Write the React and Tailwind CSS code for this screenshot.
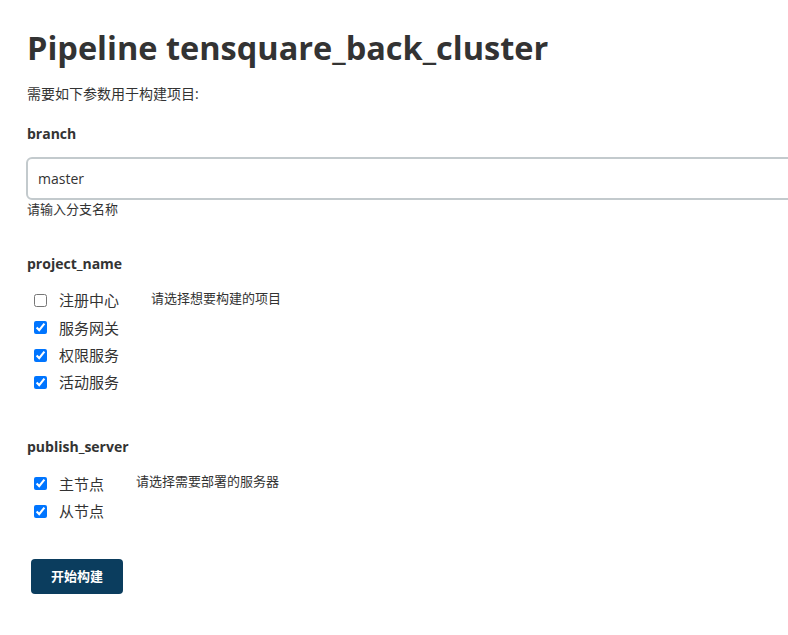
import { useState } from "react"

const FONT = { fontFamily: '"Open Sans", "Noto Sans CJK SC", sans-serif' }

const PROJECTS = [
  { id: "register", label: "注册中心", checked: false },
  { id: "gateway", label: "服务网关", checked: true },
  { id: "auth", label: "权限服务", checked: true },
  { id: "activity", label: "活动服务", checked: true },
]

const SERVERS = [
  { id: "master", label: "主节点", checked: true },
  { id: "slave", label: "从节点", checked: true },
]

function CheckList({ items, hint, hintClass }) {
  const [state, setState] = useState(() =>
    Object.fromEntries(items.map((i) => [i.id, i.checked]))
  )
  return (
    <div className="flex items-start">
      <div className="flex flex-col pl-[7px]">
        {items.map((item) => (
          <label key={item.id} className="flex h-[27.3px] items-center">
            <input
              type="checkbox"
              checked={state[item.id]}
              onChange={(e) => setState({ ...state, [item.id]: e.target.checked })}
              className="m-0 h-[13px] w-[13px] accent-[#0075ff]"
            />
            <span className="ml-[12px] text-[15px] text-[#333]">{item.label}</span>
          </label>
        ))}
      </div>
      <div className={`pt-[2px] text-[13px] text-[#333] ${hintClass}`}>{hint}</div>
    </div>
  )
}

export default function App() {
  const [branch, setBranch] = useState("master")

  return (
    <div className="min-h-[635px] overflow-hidden bg-white text-[#333]" style={FONT}>
      <div className="pl-[27px] pt-[24px]">
        <h1 className="text-[32.5px] font-bold leading-[48px] text-[#333]">
          Pipeline tensquare_back_cluster
        </h1>
        <p className="mt-[12px] text-[14px] leading-[20px]">需要如下参数用于构建项目:</p>

        <div className="mt-[20px] text-[14px] font-bold leading-[20px]">branch</div>
        <input
          value={branch}
          onChange={(e) => setBranch(e.target.value)}
          className="mt-[13px] ml-[-1px] block h-[43px] w-[900px] rounded-[6px] border-2 border-[#c3cacd] px-[10px] text-[14px] text-[#333] outline-none"
        />
        <div className="mt-0 text-[13px] leading-[18px]">请输入分支名称</div>

        <div className="mt-[36px] text-[14px] font-bold leading-[20px]">project_name</div>
        <div className="mt-[13px]">
          <CheckList items={PROJECTS} hint="请选择想要构建的项目" hintClass="ml-[32px]" />
        </div>

        <div className="mt-[41px] text-[14px] font-bold leading-[20px]">publish_server</div>
        <div className="mt-[13px]">
          <CheckList items={SERVERS} hint="请选择需要部署的服务器" hintClass="ml-[32px]" />
        </div>

        <button className="mt-[34px] ml-[4px] h-[35px] w-[92px] rounded-[4px] bg-[#0b3d5e] text-[13px] font-bold text-white">
          开始构建
        </button>
      </div>
    </div>
  )
}
